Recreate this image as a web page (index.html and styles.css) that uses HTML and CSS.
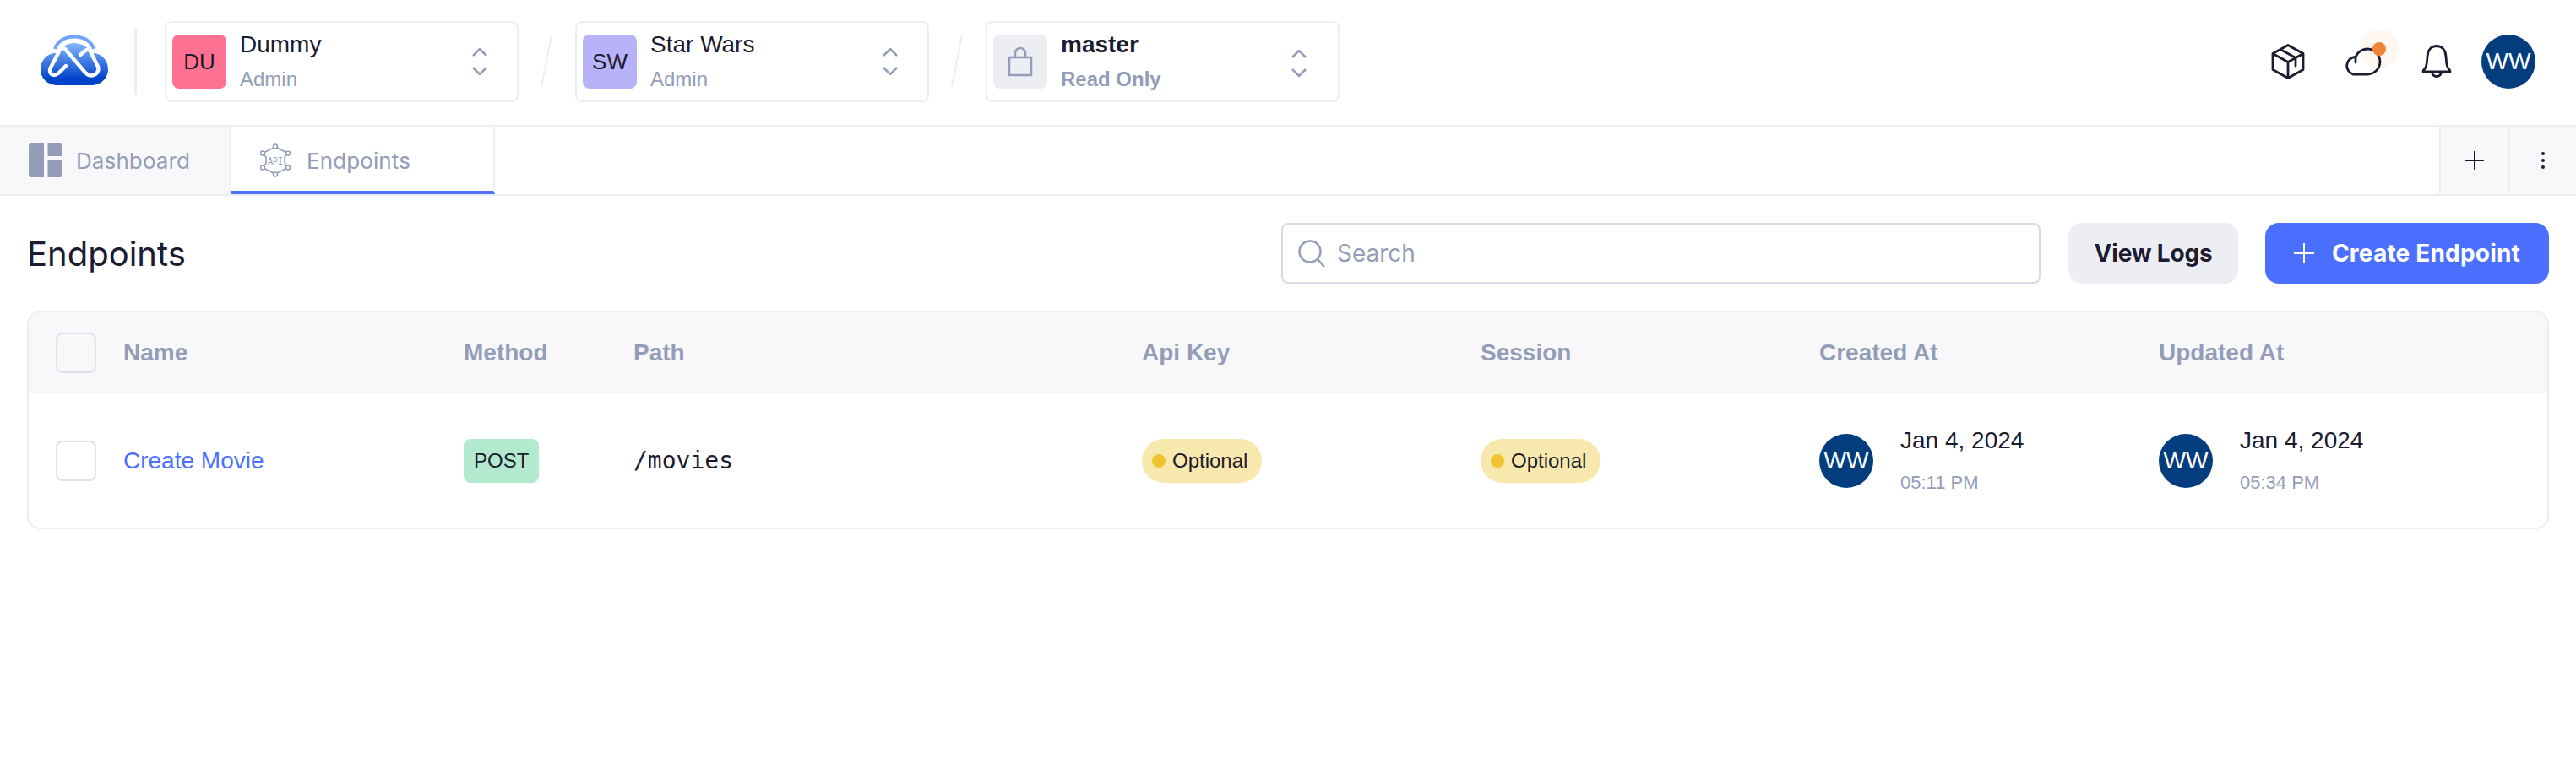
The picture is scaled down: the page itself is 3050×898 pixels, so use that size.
FILE: index.html
```html
<!DOCTYPE html>
<html lang="en">
<head>
  <meta charset="UTF-8">
  <title>Endpoints</title>
  <link rel="stylesheet" href="styles.css">
</head>
<body>
  <header class="topbar">
    <svg class="logo" viewBox="0 0 80 60" width="80" height="60">
      <defs>
        <linearGradient id="logo-fill" x1="0" y1="0" x2="0" y2="1">
          <stop offset="0" stop-color="#86B6FF"/>
          <stop offset="0.85" stop-color="#0043C8"/>
        </linearGradient>
      </defs>
      <path d="M17 16 C20 6 30 1.5 40 1.5 C50 1.5 60 6 63 16" fill="none" stroke="#6FA5FF" stroke-width="4"/>
      <path d="M20 59 C8 59 0 50 0 40 C0 29 8 21 18 21 L20 21 C23 14 31 9 40 9 C49 9 57 14 60 21 L62 21 C72 21 80 29 80 40 C80 50 72 59 60 59 Z" fill="url(#logo-fill)"/>
      <path d="M30 36 L21 45 Q15 49 12 45 Q10 42 12 38 L23 17 Q25 13 29 16 L53 44 Q59 50 65 46 Q70 42 68 37 L59 19 Q57 15 53 18 L47 23" fill="none" stroke="#fff" stroke-width="4.4" stroke-linecap="round"/>
    </svg>
    <span class="divider"></span>

    <div class="switcher">
      <span class="badge badge-pink">DU</span>
      <div class="switcher-text">
        <span class="switcher-name">Dummy</span>
        <span class="switcher-role">Admin</span>
      </div>
      <svg class="chevrons" viewBox="0 0 18 32" width="18" height="32"><path d="M1 9 L9 1 L17 9 M1 23 L9 31 L17 23"/></svg>
    </div>

    <svg class="slash" viewBox="0 0 14 62" width="14" height="62"><path d="M13 0 L1 62"/></svg>

    <div class="switcher">
      <span class="badge badge-purple">SW</span>
      <div class="switcher-text">
        <span class="switcher-name">Star Wars</span>
        <span class="switcher-role">Admin</span>
      </div>
      <svg class="chevrons" viewBox="0 0 18 32" width="18" height="32"><path d="M1 9 L9 1 L17 9 M1 23 L9 31 L17 23"/></svg>
    </div>

    <svg class="slash" viewBox="0 0 14 62" width="14" height="62"><path d="M13 0 L1 62"/></svg>

    <div class="switcher switcher-branch">
      <span class="badge badge-grey">
        <svg viewBox="0 0 30 36" width="30" height="36" class="lock"><path d="M2 13 H28 V34 H2 Z M9 13 V8 A6 6 0 0 1 21 8 V13"/></svg>
      </span>
      <div class="switcher-text">
        <span class="switcher-name">master</span>
        <span class="switcher-role">Read Only</span>
      </div>
      <svg class="chevrons" viewBox="0 0 18 32" width="18" height="32"><path d="M1 9 L9 1 L17 9 M1 23 L9 31 L17 23"/></svg>
    </div>

    <div class="topbar-right">
      <span class="icon-cell">
        <svg class="line-icon" viewBox="0 0 40 42" width="40" height="42">
          <path d="M20 1.5 L38 11.5 V30.5 L20 40.5 L2 30.5 V11.5 Z M2 11.5 L20 21.5 L38 11.5 M20 21.5 V40.5 M11 6.5 L29 16.5 V26"/>
        </svg>
      </span>
      <span class="icon-cell">
        <span class="pulse"><span class="pulse-dot"></span></span>
        <svg class="line-icon cloud" viewBox="0 0 46 34" width="46" height="34">
          <path d="M12 32 H29 A15 15 0 1 0 15 11.5 A10.5 10.5 0 0 0 12 32 Z M15 11.5 V18"/>
        </svg>
      </span>
      <span class="icon-cell">
        <svg class="line-icon" viewBox="0 0 36 40" width="36" height="40">
          <path d="M2 32 Q2 30 3.5 29 Q6 26 6.5 20 L7 14 C7.5 6 12 1.5 18 1.5 C24 1.5 28.5 6 29 14 L29.500 20 Q30 26 32.500 29 Q34 30 34 32 Z M12.500 32 A5.500 5.500 0 0 0 23.500 32"/>
        </svg>
      </span>
      <span class="avatar avatar-top">WW</span>
    </div>
  </header>

  <nav class="tabs">
    <a class="tab tab-muted">
      <svg viewBox="0 0 40 40" width="40" height="40" class="tab-icon"><path d="M3 0 H18 V40 H3 A3 3 0 0 1 0 37 V3 A3 3 0 0 1 3 0 Z M22.500 0 H37 A3 3 0 0 1 40 3 V15 H22.500 Z M22.500 20 H40 V37 A3 3 0 0 1 37 40 H22.500 Z"/></svg>
      <span>Dashboard</span>
    </a>
    <a class="tab tab-active">
      <svg viewBox="0 0 36 40" width="36" height="40" class="api-icon">
        <path d="M16 5 L5 10.500 M20 5 L31 10.500 M31 14 L29 16 V24 L31 26 M31 29.500 L20 35 M16 35 L5 29.500 M5 26 L7 24 V16 L5 14"/>
        <circle cx="18" cy="3.500" r="2.500"/><circle cx="33" cy="11.500" r="2.500"/><circle cx="33" cy="28.500" r="2.500"/>
        <circle cx="18" cy="36.500" r="2.500"/><circle cx="3" cy="28.500" r="2.500"/><circle cx="3" cy="11.500" r="2.500"/>
        <text x="18" y="24.500" text-anchor="middle" textLength="18" lengthAdjust="spacingAndGlyphs">API</text>
      </svg>
      <span>Endpoints</span>
    </a>
    <span class="tabs-space"></span>
    <button class="tab-action">
      <svg viewBox="0 0 22 22" width="22" height="22" class="line-icon"><path d="M11 0 V22 M0 11 H22"/></svg>
    </button>
    <button class="tab-action tab-action-more">
      <svg viewBox="0 0 4 20" width="4" height="20"><circle cx="2" cy="2" r="2"/><circle cx="2" cy="10" r="2"/><circle cx="2" cy="18" r="2"/></svg>
    </button>
  </nav>

  <main class="page">
    <div class="page-head">
      <h1>Endpoints</h1>
      <label class="search">
        <svg viewBox="0 0 32 33" width="32" height="33"><circle cx="14" cy="14" r="12.500"/><path d="M23 23 L31 32"/></svg>
        <span>Search</span>
      </label>
      <button class="btn btn-grey">View Logs</button>
      <button class="btn btn-blue">
        <svg viewBox="0 0 24 24" width="24" height="24"><path d="M12 0 V24 M0 12 H24"/></svg>
        Create Endpoint
      </button>
    </div>

    <div class="table">
      <div class="row row-head">
        <span class="check"></span>
        <span>Name</span>
        <span>Method</span>
        <span>Path</span>
        <span>Api Key</span>
        <span>Session</span>
        <span>Created At</span>
        <span>Updated At</span>
      </div>
      <div class="row row-body">
        <span class="check"></span>
        <a class="link">Create Movie</a>
        <span><span class="method">POST</span></span>
        <span class="path">/movies</span>
        <span><span class="pill"><i></i>Optional</span></span>
        <span><span class="pill"><i></i>Optional</span></span>
        <div class="stamp">
          <span class="avatar">WW</span>
          <div class="stamp-text"><span>Jan 4, 2024</span><small>05:11 PM</small></div>
        </div>
        <div class="stamp">
          <span class="avatar">WW</span>
          <div class="stamp-text"><span>Jan 4, 2024</span><small>05:34 PM</small></div>
        </div>
      </div>
    </div>
  </main>
</body>
</html>
```

FILE: styles.css
```css
* {
  box-sizing: border-box;
  margin: 0;
  padding: 0;
}

body {
  font-family: 'Liberation Sans', Arial, sans-serif;
  background-color: #fff;
  color: #1B1C30;
}

/* top bar */
.topbar {
  display: flex;
  align-items: center;
  height: 150px;
  padding: 0 48px 2px;
  border-bottom: 2px solid #EDEEF3;
}

.logo {
  flex: none;
  margin-top: -2px;
}

.divider {
  width: 3px;
  height: 80px;
  margin: 0 33px 0 31px;
  background-color: #EDEEF3;
}

.slash {
  flex: none;
  margin: -2px 27px 0 26px;
}

.slash path {
  fill: none;
  stroke: #EDEEF3;
  stroke-width: 2;
}

.switcher {
  display: flex;
  align-items: center;
  width: 419px;
  height: 96px;
  padding: 0 35px 0 7px;
  border: 2px solid #EDEEF3;
  border-radius: 8px;
}

.badge {
  flex: none;
  display: flex;
  align-items: center;
  justify-content: center;
  width: 64px;
  height: 64px;
  border-radius: 8px;
  font-size: 26px;
}

.badge-pink { background-color: #FF7190; }
.badge-purple { background-color: #B8B2F8; }
.badge-grey { background-color: #EDEEF3; }

.lock path {
  fill: none;
  stroke: #949DB8;
  stroke-width: 2.5;
}

.switcher-text {
  flex: 1;
  display: flex;
  flex-direction: column;
  margin-left: 16px;
  line-height: 41px;
}

.switcher-name {
  font-size: 28px;
}

.switcher-role {
  font-size: 24px;
  color: #949DB8;
}

.switcher-branch .switcher-name,
.switcher-branch .switcher-role {
  font-weight: 700;
}

.chevrons {
  flex: none;
}

.switcher-branch .chevrons {
  margin: 4px 2px 0 0;
}

.chevrons path {
  fill: none;
  stroke: #949DB8;
  stroke-width: 2.5;
}

.topbar-right {
  display: flex;
  align-items: center;
  margin-left: auto;
}

.icon-cell {
  position: relative;
  display: flex;
  justify-content: center;
  width: 88px;
}

.line-icon path {
  fill: none;
  stroke: #1B1C30;
  stroke-width: 2.8;
  stroke-linejoin: round;
  stroke-linecap: round;
}

.cloud {
  position: relative;
}

.pulse {
  position: absolute;
  top: -21px;
  left: 41px;
  display: flex;
  align-items: center;
  justify-content: center;
  width: 46px;
  height: 46px;
  border-radius: 50%;
  background-color: #FDF6F1;
}

.pulse-dot {
  position: relative;
  z-index: 1;
  width: 16px;
  height: 16px;
  border-radius: 50%;
  background-color: #F08437;
}

.avatar {
  flex: none;
  display: flex;
  align-items: center;
  justify-content: center;
  width: 64px;
  height: 64px;
  border-radius: 50%;
  background-color: #033D7E;
  color: #fff;
  font-size: 28px;
}

.avatar-top {
  margin-left: 9px;
}

/* tabs */
.tabs {
  display: flex;
  height: 82px;
  border-bottom: 2px solid #EDEEF3;
}

.tab {
  display: flex;
  align-items: center;
  height: 80px;
  padding-left: 34px;
  font-family: 'Inter', sans-serif;
  font-size: 26px;
  letter-spacing: 0.1px;
  color: #949DB8;
  border-right: 2px solid #EDEEF3;
}

.tab-muted {
  width: 274px;
  gap: 16px;
  background-color: #F8F8FB;
}

.tab-active {
  width: 312px;
  gap: 19px;
  border-bottom: 4px solid #4B6FFF;
  padding-top: 4px;
}

.tab-icon {
  fill: #949DB8;
}

.api-icon path,
.api-icon circle {
  fill: none;
  stroke: #949DB8;
  stroke-width: 1.6;
}

.api-icon text {
  font-family: 'Liberation Mono', monospace;
  font-size: 13px;
  fill: #949DB8;
}

.tabs-space {
  flex: 1;
}

.tab-action {
  display: flex;
  align-items: center;
  justify-content: center;
  width: 82px;
  height: 80px;
  background-color: #F8F8FB;
  border: none;
  border-left: 2px solid #EDEEF3;
}

.tab-action .line-icon path {
  stroke-width: 2;
}

.tab-action-more {
  width: 80px;
  fill: #1B1C30;
}

/* page */
.page {
  padding: 32px;
}

.page-head {
  display: flex;
  align-items: center;
  margin-bottom: 32px;
  font-family: 'Inter', sans-serif;
}

.page-head h1 {
  font-size: 40px;
  font-weight: 400;
  margin-right: auto;
}

.search {
  display: flex;
  align-items: center;
  gap: 14px;
  width: 899px;
  height: 72px;
  padding: 0 18px;
  margin-right: 33px;
  border: 2px solid #D8DBE7;
  border-radius: 8px;
  font-size: 28px;
  color: #949DB8;
}

.search circle,
.search path {
  fill: none;
  stroke: #949DB8;
  stroke-width: 2.5;
}

.btn {
  display: flex;
  align-items: center;
  justify-content: center;
  height: 72px;
  border: none;
  border-radius: 16px;
  font-family: inherit;
  font-size: 28px;
  font-weight: 700;
}

.btn-grey {
  width: 201px;
  margin-right: 32px;
  background-color: #EDEEF3;
  color: #1B1C30;
  letter-spacing: -0.2px;
}

.btn-blue {
  gap: 21px;
  width: 336px;
  background-color: #4B6FFF;
  color: #fff;
  letter-spacing: 0.2px;
}

.btn-blue path {
  fill: none;
  stroke: #fff;
  stroke-width: 2;
}

/* table */
.table {
  border: 2px solid #EDEEF3;
  border-radius: 16px;
  overflow: hidden;
}

.row {
  display: grid;
  grid-template-columns: 80px 403px 201px 602px 401px 401px 402px 1fr;
  align-items: center;
  padding-left: 32px;
}

.row-head {
  height: 96px;
  background-color: #F8F8FB;
  font-size: 28px;
  font-weight: 700;
  color: #949DB8;
}

.row-body {
  height: 159px;
  font-size: 24px;
}

.check {
  width: 48px;
  height: 48px;
  background-color: #fff;
  border: 2px solid #DFE1EA;
  border-radius: 8px;
}

.row-head .check {
  background-color: transparent;
}

.link {
  font-size: 28px;
  color: #4B6FFF;
}

.method {
  display: inline-block;
  padding: 0 12px;
  line-height: 52px;
  background-color: #B3E9CF;
  border-radius: 8px;
}

.path {
  font-family: 'DejaVu Sans Mono', 'Liberation Mono', monospace;
  font-size: 28px;
}

.pill {
  display: inline-flex;
  align-items: center;
  gap: 8px;
  height: 52px;
  padding: 0 17px 0 12px;
  background-color: #F7E8AE;
  border-radius: 26px;
}

.pill i {
  width: 16px;
  height: 16px;
  border-radius: 50%;
  background-color: #EEC431;
}

.stamp {
  display: flex;
  align-items: center;
  gap: 32px;
}

.stamp-text {
  display: flex;
  flex-direction: column;
  padding-top: 2px;
  font-size: 28px;
  line-height: 50px;
}

.stamp-text small {
  font-size: 22px;
  color: #949DB8;
}
```
